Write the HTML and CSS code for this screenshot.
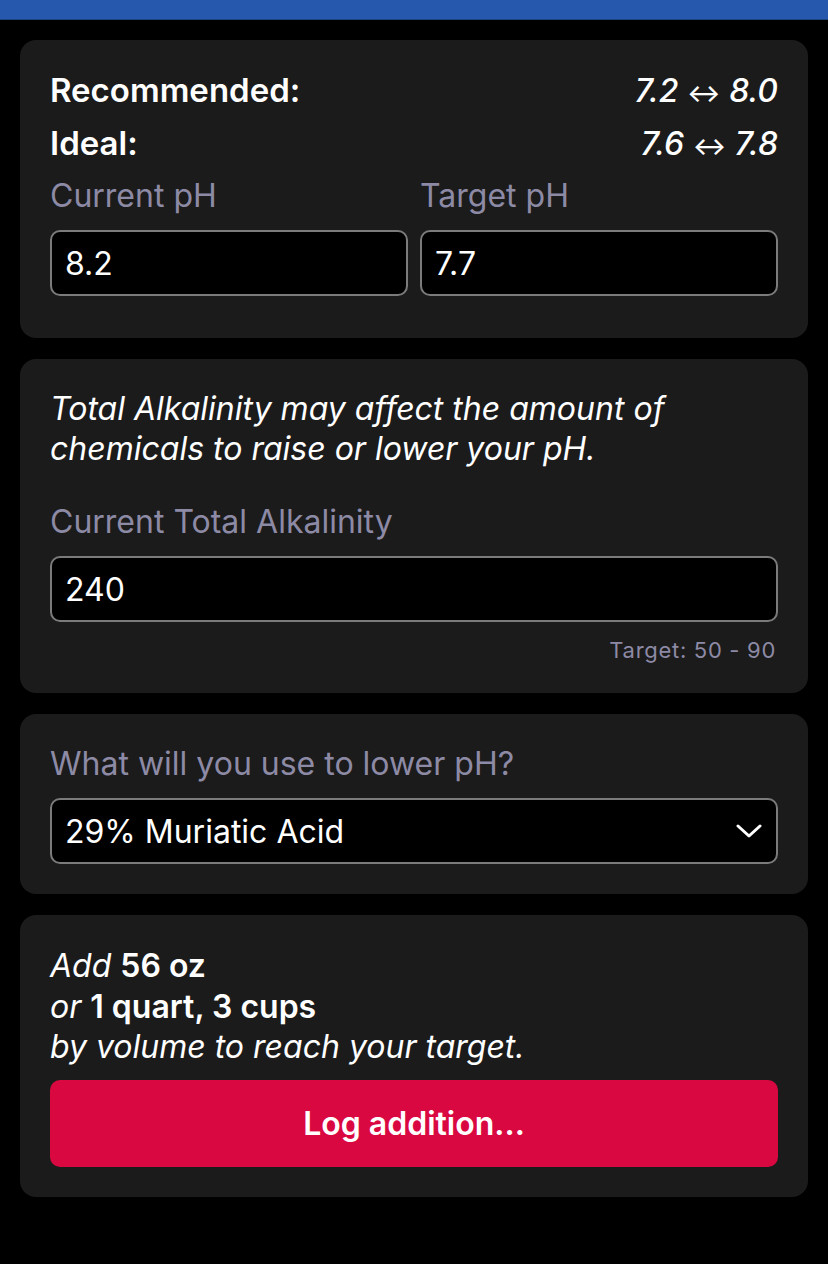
FILE: index.html
```html
<!DOCTYPE html>
<html>
<head>
    <meta name="viewport" content="width=device-width, initial-scale=1">
    <link rel="stylesheet" href="styles.css">
</head>
<body>
    <div class="top-bar"></div>
    <div class="container">
        <div class="card">
            <div class="range-row">
                <span class="range-label">Recommended:</span>
                <span class="range-value">7.2 <span class="arrow">&#8596;</span> 8.0</span>
            </div>
            <div class="range-row">
                <span class="range-label">Ideal:</span>
                <span class="range-value">7.6 <span class="arrow">&#8596;</span> 7.8</span>
            </div>
            <div class="input-group">
                <div class="input-field">
                    <label for="currentPh">Current pH</label>
                    <input type="text" id="currentPh" value="8.2">
                </div>
                <div class="input-field">
                    <label for="targetPh">Target pH</label>
                    <input type="text" id="targetPh" value="7.7">
                </div>
            </div>
        </div>

        <div class="card">
            <p class="note">Total Alkalinity may affect the amount of chemicals to raise or lower your pH.</p>
            <label for="alkalinity" class="spaced">Current Total Alkalinity</label>
            <input type="text" id="alkalinity" value="240">
            <div class="hint">Target: 50 - 90</div>
        </div>

        <div class="card">
            <label for="chemical">What will you use to lower pH?</label>
            <div class="select-wrap">
                <select id="chemical">
                    <option>29% Muriatic Acid</option>
                </select>
                <svg class="chevron" width="26" height="16" viewBox="0 0 26 16">
                    <path d="M2 3 L13 13 L24 3" fill="none" stroke="#fff" stroke-width="3" stroke-linecap="round" stroke-linejoin="round"/>
                </svg>
            </div>
        </div>

        <div class="card">
            <div class="result">
                <div><em>Add</em> <strong>56 oz</strong></div>
                <div><em>or</em> <strong>1 quart, 3 cups</strong></div>
                <div><em>by volume to reach your target.</em></div>
            </div>
            <button class="log-button">Log addition...</button>
        </div>
    </div>
</body>
</html>
```

FILE: styles.css
```css
body {
    font-family: Inter, "Liberation Sans", sans-serif;
    margin: 0;
    background: #000;
    color: #fff;
}
.top-bar {
    height: 19px;
    background: #2659ad;
    border-bottom: 1px solid #1d4380;
}
.container {
    padding: 20px;
    display: flex;
    flex-direction: column;
    gap: 21px;
}
.card {
    background: #1b1b1b;
    border-radius: 16px;
    padding: 30px;
}
.card:first-child {
    padding-top: 24px;
    padding-bottom: 42px;
}
.range-row {
    display: flex;
    justify-content: space-between;
    height: 53px;
    line-height: 53px;
    font-size: 33px;
}
.range-label {
    font-weight: 600;
}
.range-value {
    font-style: italic;
    font-weight: 500;
    font-size: 32px;
}
.arrow {
    font-style: normal;
    font-size: 25px;
}
.input-group {
    display: flex;
    gap: 12px;
    margin-top: 6px;
}
.input-field {
    flex: 1;
}
label {
    display: block;
    color: #8d8aa6;
    font-size: 32px;
    line-height: 40px;
    margin-bottom: 14px;
}
input, select {
    display: block;
    width: 100%;
    height: 66px;
    padding: 0 13px;
    background: #000;
    color: #fff;
    border: 2px solid #7b7b7b;
    border-radius: 10px;
    font-family: inherit;
    font-size: 32px;
    box-sizing: border-box;
    appearance: none;
    outline: none;
}
.note {
    margin: 0;
    font-style: italic;
    font-size: 32px;
    line-height: 40px;
}
label.spaced {
    margin-top: 33px;
}
.hint {
    margin-top: 16px;
    text-align: right;
    font-size: 22px;
    letter-spacing: 0.7px;
    line-height: 24px;
    color: #8d8aa6;
    padding-right: 2px;
}
.card:nth-child(2) {
    padding-bottom: 31px;
}
.select-wrap {
    position: relative;
}
.chevron {
    position: absolute;
    right: 16px;
    top: 25px;
}
.card:nth-child(4) {
    padding-top: 31px;
}
.result {
    font-size: 32px;
    line-height: 40.5px;
}
.result strong {
    font-weight: 600;
}
.log-button {
    display: block;
    width: 100%;
    height: 87px;
    margin-top: 12px;
    background: #da0841;
    color: #fff;
    border: none;
    border-radius: 10px;
    font-family: inherit;
    font-size: 32px;
    font-weight: 600;
}
```
